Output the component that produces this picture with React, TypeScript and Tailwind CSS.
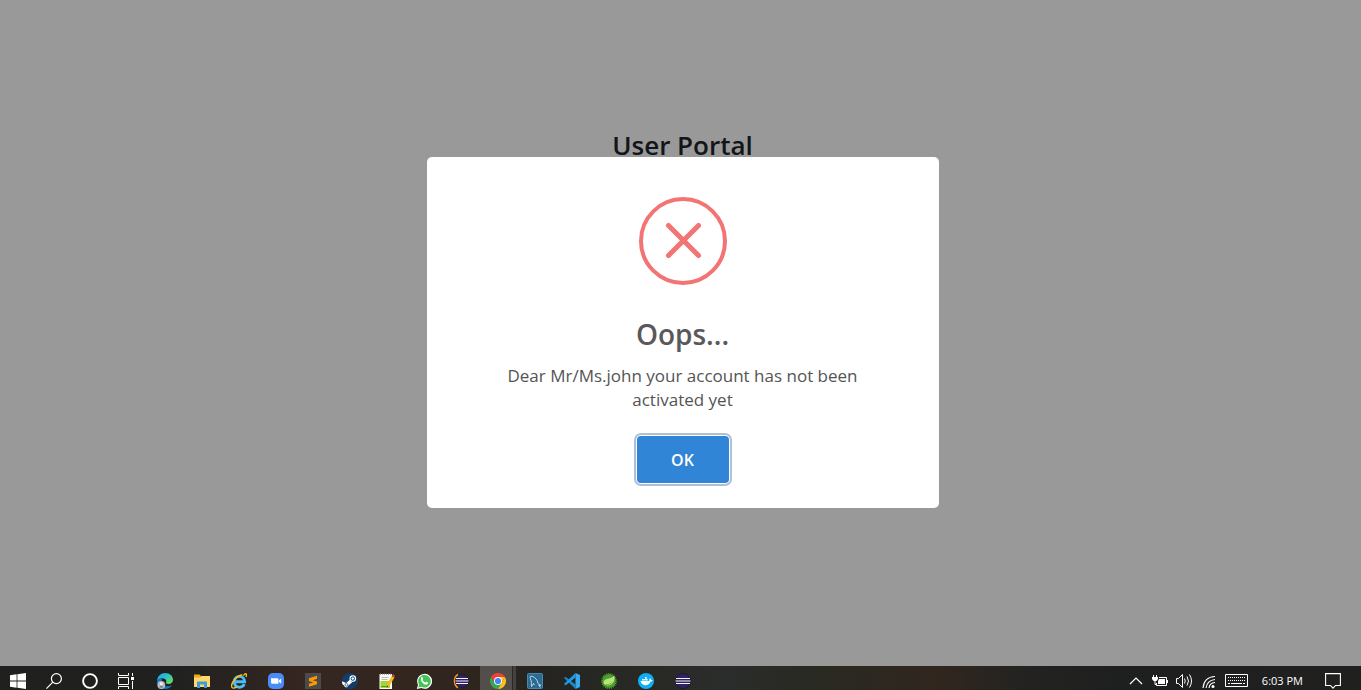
import type { ReactNode } from "react";

const svg = "block size-4";

function Windows() {
  return (
    <svg viewBox="0 0 16 16" className={svg} fill="#fff">
      <path d="M0 2.2 6.6 1.3V7.6H0zM7.4 1.2 16 0V7.6H7.4zM0 8.4H6.6V14.7L0 13.8zM7.4 8.4H16V16L7.4 14.8z" />
    </svg>
  );
}

function Search() {
  return (
    <svg viewBox="0 0 16 16" className={svg} fill="none" stroke="#fff" strokeWidth="1.2">
      <circle cx="10.4" cy="5.6" r="5" />
      <path d="M6.8 9.2.4 15.6" />
    </svg>
  );
}

function Cortana() {
  return (
    <svg viewBox="0 0 16 16" className={svg} fill="none" stroke="#fff" strokeWidth="1.9">
      <circle cx="8" cy="8" r="6.9" />
    </svg>
  );
}

function TaskView() {
  return (
    <svg viewBox="0 0 16 16" className={svg} fill="none" stroke="#fff" strokeWidth="1">
      <path d="M.5 0V2.5H10.5V0M.5 16V13.5H10.5V16M.5 4.500H10.5V11.5H.5zM14.5 0V3M14.5 8V16" />
      <path d="M13 4h3v3h-3z" fill="#fff" stroke="none" />
    </svg>
  );
}

function Edge() {
  return (
    <svg viewBox="0 0 16 16" className={svg}>
      <defs>
        <linearGradient id="edgeTop" x1="0" x2="1" y1="0" y2="1">
          <stop offset="0.1" stopColor="#1fa7e8" />
          <stop offset="0.5" stopColor="#2fc5c0" />
          <stop offset="0.9" stopColor="#6fe04a" />
        </linearGradient>
      </defs>
      <path d="M0 8C.4 3 3.8 0 8.2 0 13 0 16 3.2 16 6.8c0 2.600-2 4.200-4.500 4.200-1.800 0-2.800-.6-2.600-1.200.9-1 .8-3.800-2.400-4.400C3.600 5 .9 6.200 0 8z" fill="url(#edgeTop)" />
      <path d="M0 8c.8-2.200 3.200-3 5.400-2.800C4 7 4.400 12 9.600 13.200c2.200.4 4-.2 5.600-1.200C13.600 14.700 11 16 8 16 3.400 16 0 12.600 0 8z" fill="#1478cf" />
      <circle cx="4.300" cy="12" r="3.900" fill="#b5bbc0" />
      <circle cx="4.300" cy="10.800" r="1.500" fill="#f4efec" />
      <path d="M2.200 14.600c.4-2.200 3.800-2.200 4.200 0z" fill="#6d7379" />
    </svg>
  );
}

function Explorer() {
  return (
    <svg viewBox="0 0 16 16" className={svg}>
      <path d="M0 1.500h5.500L7 3h9v11H0z" fill="#e8a820" />
      <path d="M0 4.500 6.500 4.500 8 3h8v11H0z" fill="#ffd868" />
      <path d="M3 8.500h10V15h-3v-3.500H6V15H3z" fill="#3d9be0" />
    </svg>
  );
}

function InternetExplorer() {
  return (
    <svg viewBox="0 0 16 16" className={svg} fill="none">
      <path d="M3.200 8.800H13.600C13.400 1.600 3.300 1.600 3.300 8.800c0 6.500 7.800 6.800 10 2.400" stroke="#4cbcf2" strokeWidth="2.900" />
      <path d="M12.400 2.600C14.400-.2 16.600.4 15 4M11.300 1.800C5 3-1 11 1 14.400c.8 1.200 3 .6 5-.5" stroke="#f5c022" strokeWidth="1.400" />
    </svg>
  );
}

function Zoom() {
  return (
    <svg viewBox="0 0 16 16" className={svg}>
      <rect width="16" height="16" rx="5" fill="#4a8cf7" />
      <path d="M3 5.300h6c1 0 1.500.6 1.500 1.500v4H4.500C3.500 10.800 3 10.200 3 9.300zM11 7.200l2.200-1.600v5L11 9z" fill="#fff" />
    </svg>
  );
}

function Sublime() {
  return (
    <svg viewBox="0 0 16 16" className={svg}>
      <path d="M0 0h16v16H0z" fill="#4b4b4b" />
      <path d="M4 5.300 12 2.800v3L7.700 7.200 12 8.600v2.700L4 13.800v-3l4.300-1.400L4 8z" fill="#ff9800" />
    </svg>
  );
}

function Steam() {
  return (
    <svg viewBox="0 0 16 16" className={svg}>
      <circle cx="8" cy="8" r="8" fill="#123e6c" />
      <path d="m0 8.300 4.200 1.600 3.900-3.300 1.900 3-3.700 2.800c-.5 2.500-3.800 2.300-4.300 0L.3 11z" fill="#fff" />
      <circle cx="10.800" cy="5.600" r="3.300" fill="#fff" />
      <circle cx="10.800" cy="5.600" r="1.700" fill="none" stroke="#123e6c" />
      <circle cx="4.400" cy="11.800" r="1.400" fill="none" stroke="#123e6c" strokeWidth=".7" />
    </svg>
  );
}

function Notepad() {
  return (
    <svg viewBox="0 0 16 16" className={svg}>
      <path d="M.5 1h12.500v15H.5z" fill="#fafbf5" />
      <path d="M1.500 8h9.500v7H1.500z" fill="#9fd43c" />
      <path d="M1 .8h12" stroke="#555" strokeWidth="1.500" strokeDasharray="1 1" />
      <path d="M2.500 4.500h7M2.500 6.500h6" stroke="#b9bdb4" />
      <path d="M2 13.500h5" stroke="#5b9a28" />
      <path d="m7.500 14.500.8-4L12.700 3l2.800 1.500-5 8z" fill="#f7b71e" />
      <path d="m12.700 3 1.200-2 2.100 1.200-.8 2z" fill="#c94236" />
      <path d="m7.500 14.500.4-2 1.500 1z" fill="#222" />
    </svg>
  );
}

function WhatsApp() {
  return (
    <svg viewBox="0 0 16 16" className={svg}>
      <path d="M.8 16 2 11.800A7.500 7.500 0 1 1 5.300 15z" fill="#fff" />
      <path d="m2.200 14.600.9-3A6.300 6.300 0 1 1 5.400 13.800z" fill="#43c553" />
      <path d="M5.300 4.200c.4-.4 1-.4 1.200.1l.6 1.400c.1.500-.5.900-.6 1.300.6 1.200 1.500 2 2.700 2.500.4-.1.800-.9 1.200-.8l1.600.8c.3.400-.1 1.700-1 2C7.800 12.400 3.600 7.500 5.300 4.200z" fill="#fff" />
    </svg>
  );
}

function Eclipse({ crescent = false }: { crescent?: boolean }) {
  return (
    <svg viewBox="0 0 16 16" className={svg}>
      {crescent && <path d="M5 1.500C.5 4 .5 12 5 14.800" fill="none" stroke="#f29422" strokeWidth="1.800" />}
      <ellipse cx={crescent ? 9 : 8} cy="8" rx={crescent ? 6.700 : 7.500} ry={crescent ? 6.500 : 7.500} fill="#30235f" stroke="#171230" strokeWidth=".6" />
      <path d={crescent ? "M3 5.500h12M2.500 8h13M3 10.500h12" : "M1 5.500h14M.5 8h15M1 10.500h14"} stroke="#f4f2fb" strokeWidth="1.200" />
    </svg>
  );
}

function Chrome() {
  return (
    <svg viewBox="0 0 16 16" className={svg}>
      <path d="M8 4h6.930L11.500 10 8 16V8z" fill="#fbc116" />
      <path d="M14.930 4A8 8 0 0 1 8 16l3.500-6z" fill="#fbc116" />
      <path d="M8 4h6.930A8 8 0 0 0 1.070 4L4.500 10z" fill="#ea4335" />
      <path d="M1.070 4 4.500 10 8 12l3.500-2L8 16A8 8 0 0 1 1.070 4z" fill="#34a853" />
      <circle cx="8" cy="8" r="4" fill="#fff" />
      <circle cx="8" cy="8" r="3.100" fill="#4285f4" />
    </svg>
  );
}

function Workbench() {
  return (
    <svg viewBox="0 0 16 16" className={svg}>
      <rect x=".5" y=".5" width="15" height="15" rx="1" fill="#2a6a93" stroke="#4c86a9" />
      <path d="M4.500 13.500C4 11 5 10 4 7.500 3 5 2.500 3.500 4 3.200c2-.2 5 2 6 4.300.6 1.200.8 2 1 3l2.800 1.800-2 .2 1.700 2M4.500 13.500 6.500 10.500l1 1.500" fill="none" stroke="#cfe2ec" strokeWidth=".9" />
    </svg>
  );
}

function VSCode() {
  return (
    <svg viewBox="0 0 16 16" className={svg}>
      <path d="M1.500 3.800 0 5l11.500 11V11.500z" fill="#1586cf" />
      <path d="M11.500 0v4.500L1.600 12.300 0 11z" fill="#1f9be6" />
      <path d="M11.500 0 16 2v12l-4.500 2z" fill="#36a9ef" />
    </svg>
  );
}

function Spring() {
  return (
    <svg viewBox="0 0 16 16" className={svg}>
      <circle cx="8" cy="8" r="6.800" fill="#4aa02c" />
      <circle cx="8" cy="8" r="7" fill="none" stroke="#4aa02c" strokeWidth="1.800" strokeDasharray="1.100 .9" />
      <path d="M2.500 9.500c.5-5 7.500-2.500 10.700-7C14.800 8 11 13.300 5 12.400c4-.6 6.500-2.500 7.300-5-2 3.500-5 4-9 4.100z" fill="#b9e47b" />
    </svg>
  );
}

function Docker() {
  return (
    <svg viewBox="0 0 16 16" className={svg}>
      <circle cx="8" cy="8" r="8" fill="#0db0f5" />
      <path d="M2.500 8h8.300c.8 0 .8-1.500.5-2l.8-.7c.7.5 1 1 1 1.700.7-.1 1.200 0 1.500.4-.5.800-1.200 1.100-2 1.100C11 13.600 3.300 13.300 2.500 8zM4 6h1.700v1.600H4zM6 6h1.700v1.600H6zM8 6h1.700v1.600H8zM7 4h1.700v1.700H7z" fill="#fff" />
    </svg>
  );
}

function TaskButton({ label, wide = false, children }: { label: string; wide?: boolean; children: ReactNode }) {
  return (
    <button
      type="button"
      aria-label={label}
      className={wide ? "flex h-6 w-[37px] justify-center pt-[7px]" : "flex h-6 w-9 justify-center pt-[7px]"}
    >
      {children}
    </button>
  );
}

function Taskbar() {
  return (
    <footer className="flex h-6 shrink-0 justify-between overflow-hidden bg-[linear-gradient(90deg,#20211f_0%,#20211f_13%,#352621_22%,#33261f_29%,#2f251f_35%,#252421_40%,#292a26_49%,#2b2d2c_53%,#292922_60%,#30261e_69%,#242321_75%,#1e1f1f_82%,#20201f_100%)]">
      <nav aria-label="Applications" className="flex">
        <TaskButton label="Start"><Windows /></TaskButton>
        <TaskButton label="Search"><Search /></TaskButton>
        <TaskButton label="Cortana"><Cortana /></TaskButton>
        <TaskButton label="Task view"><TaskView /></TaskButton>
        <div className="ml-0.5 flex">
          <TaskButton wide label="Edge"><Edge /></TaskButton>
          <TaskButton wide label="File Explorer"><Explorer /></TaskButton>
          <TaskButton wide label="Internet Explorer"><InternetExplorer /></TaskButton>
          <TaskButton wide label="Zoom"><Zoom /></TaskButton>
          <TaskButton wide label="Sublime Text"><Sublime /></TaskButton>
          <TaskButton wide label="Steam"><Steam /></TaskButton>
          <TaskButton wide label="Notepad++"><Notepad /></TaskButton>
          <TaskButton wide label="WhatsApp"><WhatsApp /></TaskButton>
          <TaskButton wide label="Eclipse"><Eclipse crescent /></TaskButton>
          <button
            type="button"
            aria-label="Chrome"
            className="flex h-6 w-[37px] justify-center bg-[linear-gradient(90deg,transparent_1px,#534e4a_1px,#534e4a_33px,#292826_33px,#292826_34px,#44413e_34px)] pt-[7px]"
          >
            <Chrome />
          </button>
          <TaskButton wide label="MySQL Workbench"><Workbench /></TaskButton>
          <TaskButton wide label="Visual Studio Code"><VSCode /></TaskButton>
          <TaskButton wide label="Spring Tools"><Spring /></TaskButton>
          <TaskButton wide label="Docker"><Docker /></TaskButton>
          <TaskButton wide label="Eclipse Installer"><Eclipse /></TaskButton>
        </div>
      </nav>
      <div className="flex items-start pt-[7px] pr-5 text-white">
        <button type="button" aria-label="Show hidden icons" className="mr-2">
          <svg viewBox="0 0 16 16" className={svg} fill="none" stroke="#fff" strokeWidth="1.200">
            <path d="m2 11 6-6 6 6" />
          </svg>
        </button>
        <button type="button" aria-label="Battery" className="mr-2">
          <svg viewBox="0 0 16 16" className={svg} fill="none" stroke="#fff">
            <path d="M7 4.500h7.500v8H4.500V10M15.500 7v3M1.500 2v2M4.500 2v2M3 7v4.500h2" />
            <path d="M0 4h6v2L4.500 8h-3L0 6zM7 6h6v5H6V8z" fill="#fff" stroke="none" />
          </svg>
        </button>
        <button type="button" aria-label="Volume" className="mr-[10px]">
          <svg viewBox="0 0 16 16" className={svg} fill="none" stroke="#fff">
            <path d="M.5 5.500h2l4-4v13l-4-4h-2zM8.500 5.500q1.500 2.500 0 5M11 3.500q3 4.500 0 9M13.500 1.500q4 6.500 0 13" />
          </svg>
        </button>
        <button type="button" aria-label="Network" className="mr-[7px]">
          <svg viewBox="0 0 16 16" className={svg} fill="none" stroke="#fff" strokeWidth="1.100">
            <path d="M1 15Q2 4 13 3.500M4 15Q5 7.500 13 6.500M7 15q.5-5 6-5.500" />
            <circle cx="11" cy="13.500" r="1.500" fill="#fff" stroke="none" />
          </svg>
        </button>
        <button type="button" aria-label="Touch keyboard" className="mr-[14px]">
          <svg viewBox="0 0 23 16" className="block h-4 w-[23px]" fill="none" stroke="#fff">
            <path d="M.5 1.500h22v12H.5z" />
            <path d="M3 4.500h17M3 7.500h17" strokeDasharray="1 1" />
            <path d="M3 10.500h2M6 10.500h11M18 10.500h2" />
          </svg>
        </button>
        <time className="mr-[22px] text-[11px] leading-4">6:03 PM</time>
        <button type="button" aria-label="Notifications">
          <svg viewBox="0 0 16 16" className={svg} fill="none" stroke="#fff" strokeWidth="1.100">
            <path d="M.6.6h14.800v11.900H10.500L8 15.200l-2.500-2.700H.6z" />
          </svg>
        </button>
      </div>
    </footer>
  );
}

export default function App() {
  return (
    <div className="flex h-screen flex-col overflow-hidden font-['Open_Sans','Noto_Sans',sans-serif]">
      <main className="relative flex-1 bg-white">
        <h1 className="pt-[127px] pl-1 text-center text-[26px] leading-9 font-semibold text-[#212529]">User Portal</h1>
        <div className="absolute inset-0 flex items-center justify-center bg-black/40 pb-0.5 pl-1">
          <section
            role="alertdialog"
            aria-labelledby="alert-title"
            aria-describedby="alert-text"
            className="flex w-full max-w-lg flex-col items-center rounded-[5px] bg-white px-12 pt-10 pb-[25px]"
          >
            <svg viewBox="0 0 88 88" className="block size-[88px]" fill="none" stroke="#f27474">
              <circle cx="44" cy="44" r="42" strokeWidth="4" />
              <path d="m29.500 28.500 30 30M59.500 28.500l-30 30" strokeWidth="5" strokeLinecap="round" />
            </svg>
            <h2 id="alert-title" className="mt-[29px] text-[28px] leading-10 font-semibold text-[#595959]">Oops...</h2>
            <p id="alert-text" className="mt-[10px] max-w-[380px] text-center text-[17px] leading-6 text-[#545454]">
              Dear Mr/Ms.john your account has not been activated yet
            </p>
            <button
              type="button"
              className="mt-6 h-[47px] w-[92px] rounded-[4px] bg-[#3085d6] pt-0.5 text-[16px] font-semibold text-white shadow-[0_0_0_1px_#fff,0_0_0_3px_rgba(50,100,150,0.4)]"
            >
              OK
            </button>
          </section>
        </div>
      </main>
      <Taskbar />
    </div>
  );
}
